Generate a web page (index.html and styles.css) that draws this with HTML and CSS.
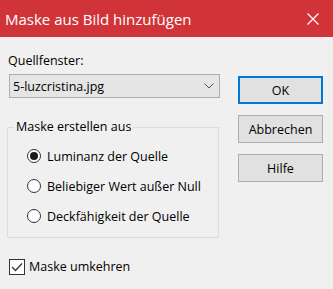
FILE: index.html
```html
<!DOCTYPE html>
<html lang="de">
<head>
    <meta charset="UTF-8">
    <title>Maske aus Bild hinzufügen</title>
    <link rel="stylesheet" href="styles.css">
</head>
<body>
    <div class="titlebar">
        <span class="title">Maske aus Bild hinzufügen</span>
        <svg class="close" width="12" height="12" viewBox="0 0 12 12">
            <path d="M0.5 0.5 L11.5 11.5 M11.5 0.5 L0.5 11.5" stroke="#fff" stroke-width="1.2" fill="none"/>
        </svg>
    </div>

    <div class="dialog">
        <div class="main">
            <div class="label">Quellfenster:</div>
            <div class="combo">
                <span>5-luzcristina.jpg</span>
                <svg width="10" height="6" viewBox="0 0 10 6">
                    <path d="M0.5 0.5 L5 5 L9.5 0.5" stroke="#555" stroke-width="1" fill="none"/>
                </svg>
            </div>

            <fieldset class="group">
                <legend>Maske erstellen aus</legend>
                <div class="option"><span class="radio checked"></span>Luminanz der Quelle</div>
                <div class="option"><span class="radio"></span>Beliebiger Wert außer Null</div>
                <div class="option"><span class="radio"></span>Deckfähigkeit der Quelle</div>
            </fieldset>

            <div class="check-row">
                <span class="checkbox">
                    <svg width="12" height="10" viewBox="0 0 12 10">
                        <path d="M1 5 L4.5 8.5 L11 1.5" stroke="#333" stroke-width="1.3" fill="none"/>
                    </svg>
                </span>
                Maske umkehren
            </div>
        </div>

        <div class="buttons">
            <button class="btn default">OK</button>
            <button class="btn">Abbrechen</button>
            <button class="btn">Hilfe</button>
        </div>
    </div>
</body>
</html>
```

FILE: styles.css
```css
* {
    margin: 0;
    padding: 0;
    box-sizing: border-box;
}

body {
    font-family: 'Open Sans', 'Noto Sans', sans-serif;
    font-size: 12.5px;
    color: #000;
    background-color: #f0f0f0;
    width: 333px;
    height: 289px;
    overflow: hidden;
}

.titlebar {
    height: 37px;
    background: #d13438;
    color: white;
    display: flex;
    align-items: center;
    justify-content: space-between;
    padding: 0 14px 0 5px;
}

.title {
    font-size: 15px;
}

.dialog {
    display: flex;
    padding: 16px 10px 0 7px;
    gap: 18px;
}

.main {
    width: 213px;
}

.label {
    line-height: 16px;
    padding-left: 1px;
}

.combo {
    margin: 5px 0 0 2px;
    height: 24px;
    width: 211px;
    background: #e5e5e5;
    border: 1px solid #adadad;
    display: flex;
    align-items: center;
    justify-content: space-between;
    padding: 0 5px 0 3px;
}

.group {
    margin-top: 21px;
    border: 1px solid #dcdcdc;
    height: 119px;
    width: 212px;
    padding: 6px 0 0 19px;
}

.group legend {
    margin-left: -13px;
    padding: 0 2px;
    line-height: 16px;
}

.option {
    display: flex;
    align-items: center;
    gap: 6px;
    height: 30px;
}

.radio {
    width: 14px;
    height: 14px;
    border: 1px solid #333;
    border-radius: 50%;
    background: white;
    display: flex;
    align-items: center;
    justify-content: center;
}

.radio.checked::after {
    content: '';
    width: 8px;
    height: 8px;
    border-radius: 50%;
    background: #1a1a1a;
}

.check-row {
    margin-top: 20px;
    padding-left: 2px;
    display: flex;
    align-items: center;
    gap: 4px;
}

.checkbox {
    width: 16px;
    height: 16px;
    border: 1px solid #333;
    background: white;
    display: flex;
    align-items: center;
    justify-content: center;
}

.buttons {
    display: flex;
    flex-direction: column;
    gap: 11px;
    padding-top: 23px;
}

.btn {
    width: 85px;
    height: 28px;
    font-family: inherit;
    font-size: 12.5px;
    background: #e1e1e1;
    border: 1px solid #adadad;
}

.btn.default {
    border: 2px solid #0078d7;
}
```
